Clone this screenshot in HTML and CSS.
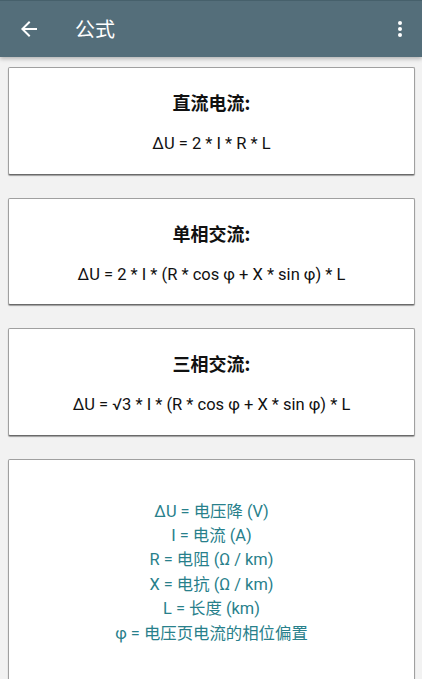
FILE: index.html
```html
<!DOCTYPE html>
<html lang="zh">
<head>
<meta charset="utf-8">
<link rel="stylesheet" href="styles.css">
</head>
<body>
<header class="toolbar">
  <svg class="back" width="24" height="24" viewBox="0 0 24 24"><path d="M20 11H7.83l5.59-5.59L12 4l-8 8 8 8 1.41-1.41L7.83 13H20v-2z" fill="#fff"/></svg>
  <div class="title">公式</div>
  <svg class="more" width="24" height="24" viewBox="0 0 24 24"><circle cx="12" cy="6" r="2" fill="#fff"/><circle cx="12" cy="12" r="2" fill="#fff"/><circle cx="12" cy="18" r="2" fill="#fff"/></svg>
</header>
<main class="content">
  <section class="card">
    <h2 class="card-title">直流电流:</h2>
    <p class="formula">ΔU = 2 * I * R * L</p>
  </section>
  <section class="card">
    <h2 class="card-title">单相交流:</h2>
    <p class="formula">ΔU = 2 * I * (R * cos φ + X * sin φ) * L</p>
  </section>
  <section class="card">
    <h2 class="card-title">三相交流:</h2>
    <p class="formula">ΔU = √3 * I * (R * cos φ + X * sin φ) * L</p>
  </section>
  <section class="card legend">
    <p>ΔU = 电压降 (V)</p>
    <p>I = 电流 (A)</p>
    <p>R = 电阻 (Ω / km)</p>
    <p>X = 电抗 (Ω / km)</p>
    <p>L = 长度 (km)</p>
    <p>φ = 电压页电流的相位偏置</p>
  </section>
</main>
</body>
</html>
```
FILE: styles.css
```css
html, body {
  margin: 0;
  padding: 0;
  height: 100%;
  overflow: hidden;
}
body {
  background: #f2f2f2;
  font-family: Roboto, "Noto Sans CJK SC", sans-serif;
  color: #111;
}
.toolbar {
  height: 57px;
  background: #546e7a;
  border-top: 1px solid #46606b;
  box-sizing: border-box;
  display: flex;
  align-items: center;
  padding: 0 10px 0 17px;
  box-shadow: 0 2px 4px rgba(0,0,0,0.25);
  position: relative;
  z-index: 1;
}
.back {
  flex: none;
}
.title {
  color: #fff;
  font-size: 20px;
  margin-left: 34px;
  flex: 1;
  font-family: "Noto Sans CJK SC", sans-serif;
  line-height: 1;
}
.more {
  flex: none;
}
.content {
  display: flex;
  flex-direction: column;
  gap: 23px;
  padding: 10px 7px 0 8px;
}
.card {
  background: #fff;
  border: 1px solid #a0a0a0;
  border-bottom-color: #6a6a6a;
  border-radius: 2px;
  box-shadow: 0 1px 1px rgba(0,0,0,0.35);
  height: 107.5px;
  box-sizing: border-box;
  display: flex;
  flex-direction: column;
  align-items: center;
  padding-top: 22px;
}
.card-title {
  margin: 0;
  font-size: 18px;
  font-weight: bold;
  line-height: 24px;
  font-family: "Noto Sans CJK SC", sans-serif;
}
.formula {
  margin: 20px 0 0;
  font-size: 16.5px;
  line-height: 20px;
}
.legend {
  height: 240px;
  padding-top: 40px;
  color: #28808b;
}
.legend p {
  margin: 0;
  font-size: 16.4px;
  line-height: 24.4px;
}
```
